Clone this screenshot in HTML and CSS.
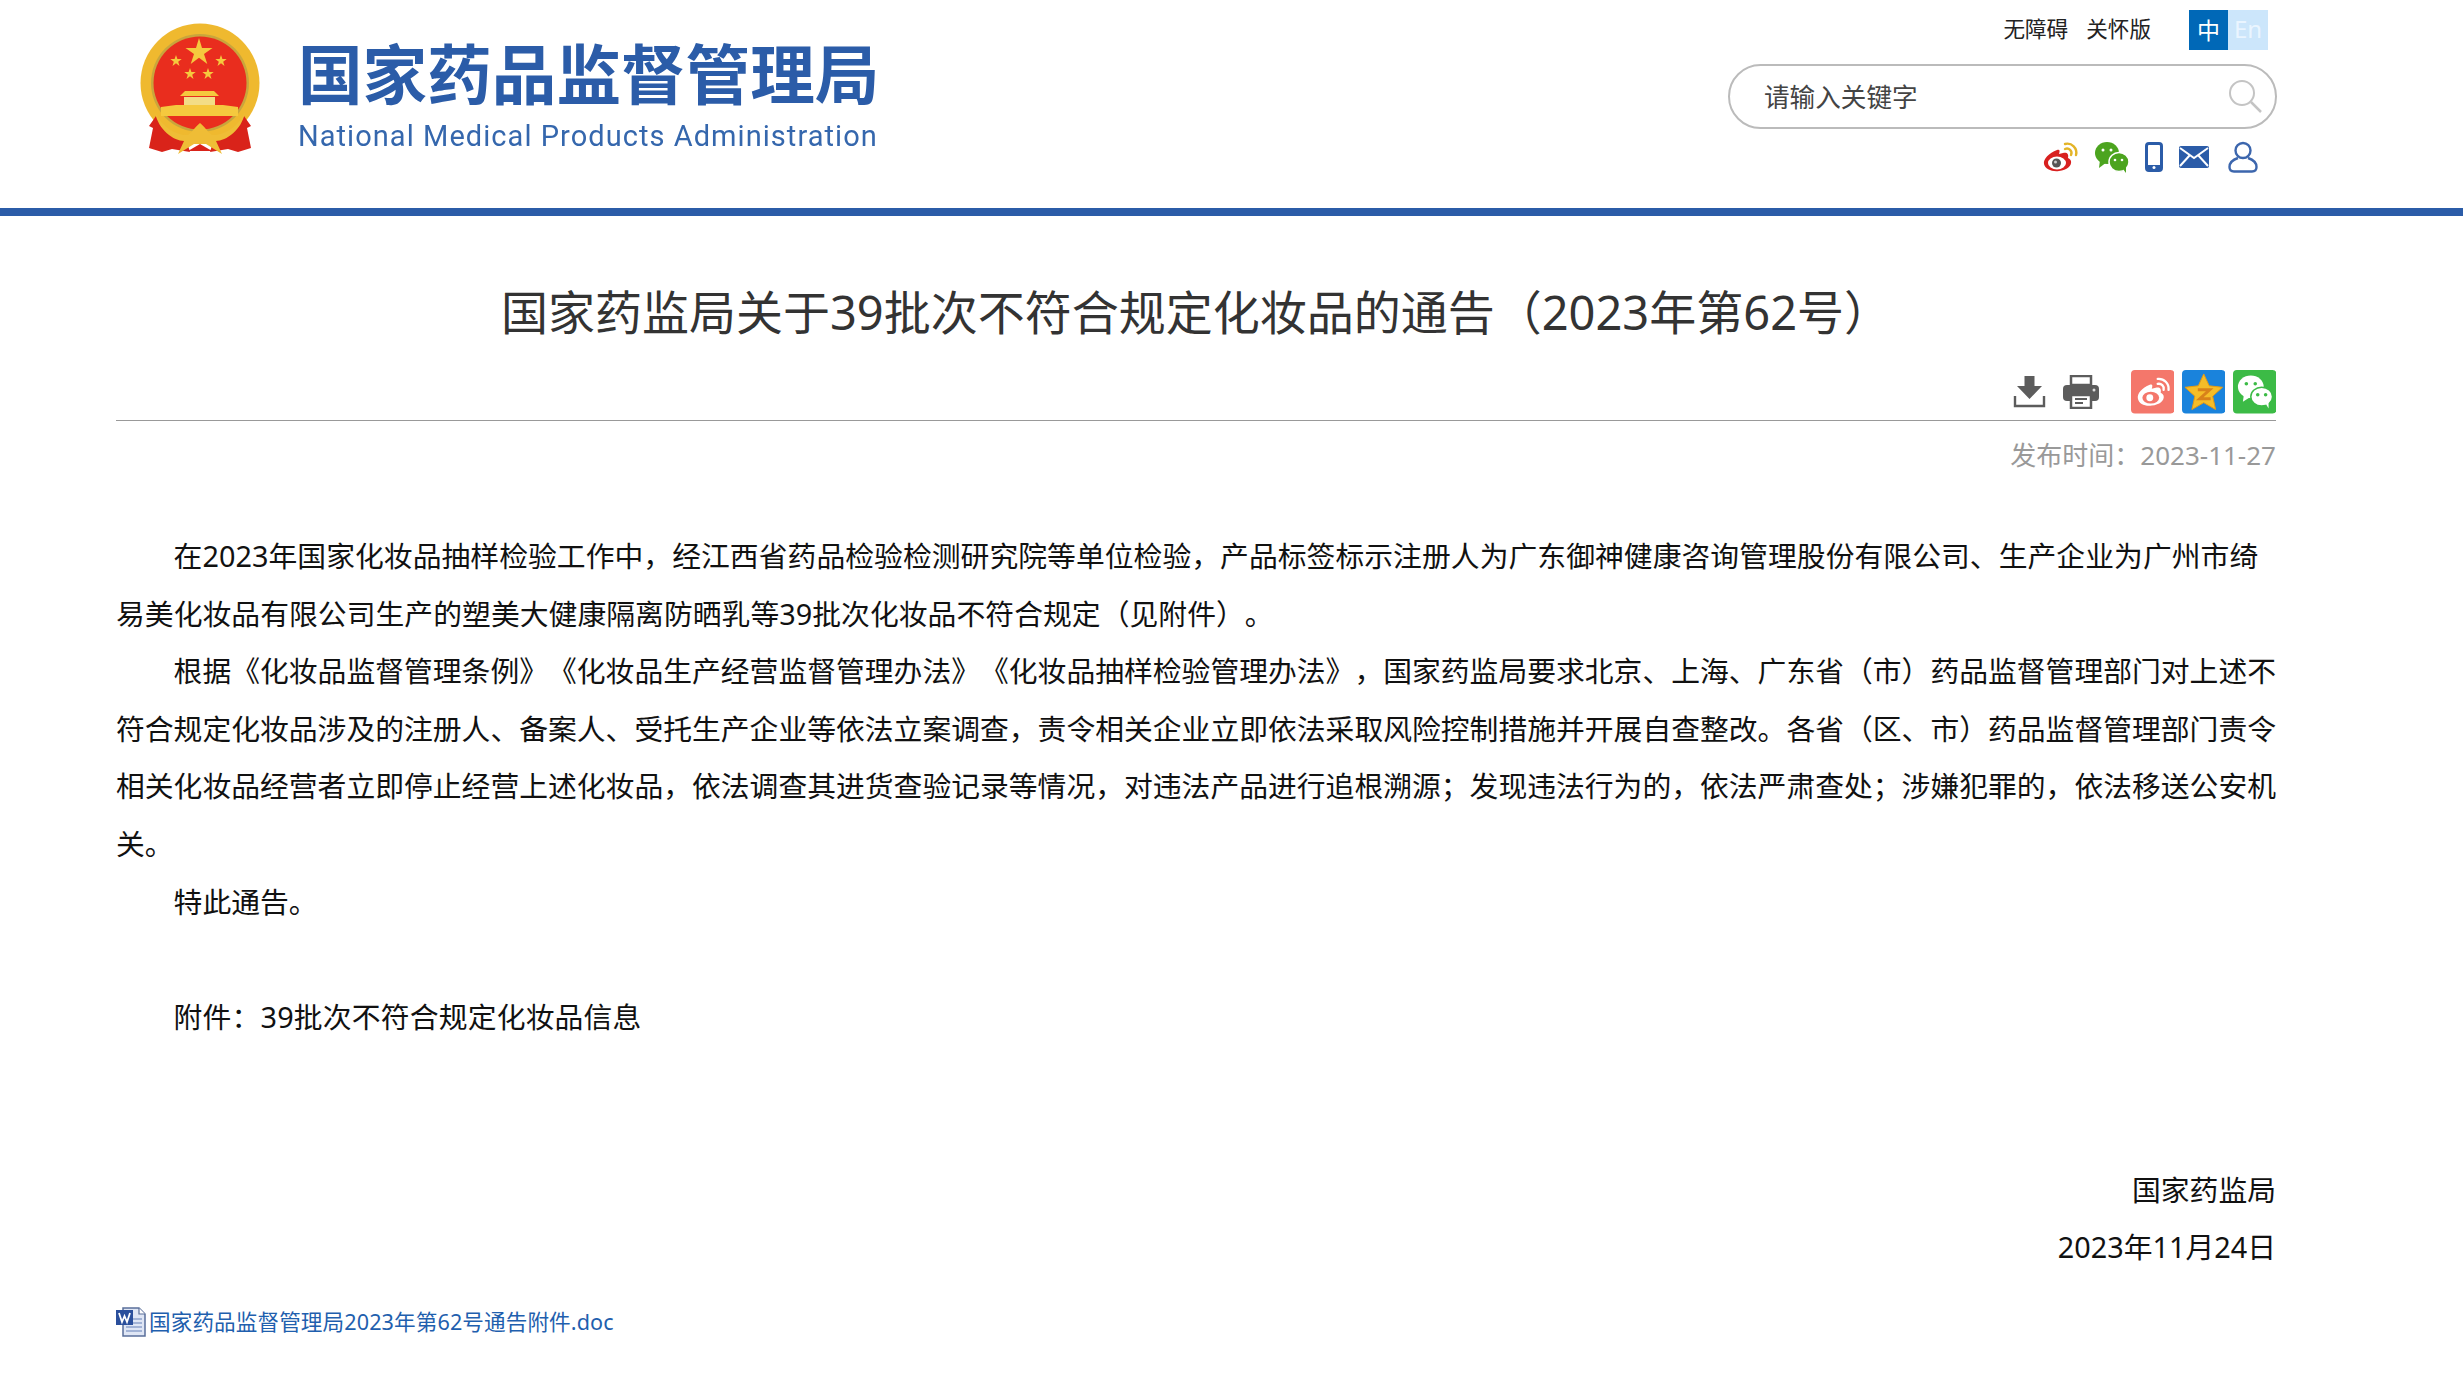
FILE: index.html
```html
<!DOCTYPE html>
<html lang="zh-CN">
<head>
<meta charset="utf-8">
<title>国家药监局关于39批次不符合规定化妆品的通告（2023年第62号）</title>
<link rel="stylesheet" href="styles.css">
</head>
<body>
<header class="site-header">
  <div class="brand">
    <svg class="emblem" viewBox="0 0 132 136" aria-hidden="true">
      <defs>
        <path id="star-s" d="M0 -6 L1.400 -1.900 H5.700 L2.200 .700 3.500 4.900 0 2.300 -3.500 4.900 -2.200 .700 -5.700 -1.900 H-1.400 Z"/>
      </defs>
      <g transform="translate(-1 0)">
      <circle cx="66" cy="63" r="59.500" fill="#efb92f"/>
      <circle cx="66" cy="63" r="49" fill="#c9a53c"/>
      <circle cx="66" cy="63" r="46.500" fill="#e92d1e"/>
      <g fill="#f5c93e">
        <path d="M65 18 L68 28 H78.500 L70 34 73.300 44 65 37.800 56.700 44 60 34 51.500 28 H62 Z"/>
        <use href="#star-s" x="42" y="41"/>
        <use href="#star-s" x="87" y="41"/>
        <use href="#star-s" x="56" y="54"/>
        <use href="#star-s" x="74" y="54"/>
        <path d="M46 76 L51 71 H80 L85 76 Z"/>
        <path d="M50 77 H81 V85 H50 Z" fill="#f3dd86"/>
        <path d="M27 87 L42 85 H89 L104 87 V96 H27 Z"/>
      </g>
      <path d="M22 96 C30 112 46 118 52 119 L56 132 L38 129 L28 132 L15 128 L19 108 L15 106 Z" fill="#d9231a"/>
      <path d="M110 96 C102 112 86 118 80 119 L76 132 L94 129 L104 132 L117 128 L113 108 L117 106 Z" fill="#d9231a"/>
      <path d="M21 92 C28 108 44 116 54 115 C60 110 62 106 66 103 C70 106 72 110 78 115 C88 116 104 108 111 92 C108 110 92 121 82 121 L88 134 L72 124 H60 L44 134 L50 121 C40 121 24 110 21 92 Z" fill="#efbd36"/>
      <path d="M54 131 L66 124 L78 131 Z" fill="#d9231a"/>
      </g>
    </svg>
    <div class="brand-text">
      <div class="brand-cn">国家药品监督管理局</div>
      <div class="brand-en">National Medical Products Administration</div>
    </div>
  </div>
  <div class="header-tools">
    <div class="top-links">
      <a class="top-link">无障碍</a>
      <a class="top-link">关怀版</a>
      <div class="lang"><span class="lang-cn">中</span><span class="lang-en">En</span></div>
    </div>
    <div class="search">
      <span class="search-text">请输入关键字</span>
      <svg class="search-icon" viewBox="0 0 34 34" aria-hidden="true"><circle cx="14" cy="14" r="12" fill="none" stroke="#c4c4c4" stroke-width="2"/><path d="M23 23 L33 33" stroke="#c4c4c4" stroke-width="2.500"/></svg>
    </div>
    <div class="social">
      <svg class="ic-weibo" viewBox="0 0 36 32" aria-hidden="true">
        <path d="M14 9 C6 12 0 18 1 23 C2 28 9 31 16 30 C24 29 29 25 28 20 C27.500 18 25 17 25 17 C26 13 24 11 20 12 L16 13 C17 10 17 8 14 9Z" fill="#d8201f"/>
        <ellipse cx="14" cy="22" rx="9" ry="6.500" fill="#fff"/>
        <circle cx="13.500" cy="22" r="4.500" fill="#555"/>
        <circle cx="12.500" cy="21" r="1.500" fill="#ccc"/>
        <path d="M22 3 A9 9 0 0 1 33 14 M22 8 A4.500 4.500 0 0 1 28 14" fill="none" stroke="#e3b428" stroke-width="2.400" stroke-linecap="round"/>
      </svg>
      <svg class="ic-wechat" viewBox="0 0 36 32" aria-hidden="true">
        <ellipse cx="13" cy="12" rx="12" ry="11" fill="#4ca41f"/>
        <path d="M6 19 L5 27 L13 21Z" fill="#4ca41f"/>
        <ellipse cx="25" cy="21" rx="10" ry="9.500" fill="#4ca41f" stroke="#fff" stroke-width="1.500"/>
        <path d="M29 28 L32 32 L32 25Z" fill="#4ca41f"/>
        <circle cx="9" cy="9" r="1.500" fill="#fff"/><circle cx="17" cy="9" r="1.500" fill="#fff"/>
        <circle cx="21" cy="19" r="1.300" fill="#fff"/><circle cx="28" cy="19" r="1.300" fill="#fff"/>
      </svg>
      <svg class="ic-phone" viewBox="0 0 18 30" aria-hidden="true">
        <rect x="1.500" y="1.500" width="15" height="27" rx="2.500" fill="none" stroke="#2b5ca8" stroke-width="3"/>
        <rect x="2" y="23" width="14" height="6" fill="#2b5ca8"/><circle cx="9" cy="25.500" r="1.500" fill="#fff"/>
      </svg>
      <svg class="ic-mail" viewBox="0 0 30 22" aria-hidden="true">
        <rect width="30" height="22" rx="2" fill="#2b5ca8"/>
        <path d="M1 2 L15 12 L29 2 M1 20 L11 9 M29 20 L19 9" fill="none" stroke="#fff" stroke-width="2"/>
      </svg>
      <svg class="ic-user" viewBox="0 0 30 32" aria-hidden="true">
        <circle cx="15" cy="9.500" r="7.500" fill="none" stroke="#3c66ad" stroke-width="2.400"/>
        <path d="M10 17 C4 19 1.500 22 1.500 26 C1.500 29 3 30.500 6 30.500 H24 C27 30.500 28.500 29 28.500 26 C28.500 22 26 19 20 17" fill="none" stroke="#3c66ad" stroke-width="2.400"/>
      </svg>
    </div>
  </div>
</header>

<main class="article">
  <h1 class="title">国家药监局关于39批次不符合规定化妆品的通告（2023年第62号）</h1>
  <div class="article-tools">
    <svg class="ic-download" viewBox="0 0 33 33" aria-hidden="true">
      <path d="M11.500 1 H21.500 V11 H29 L16.500 24 L4 11 H11.500 Z" fill="#5c5c5c"/>
      <path d="M2 21 V31 H31 V21" fill="none" stroke="#5c5c5c" stroke-width="2.400"/>
    </svg>
    <svg class="ic-print" viewBox="0 0 36 34" aria-hidden="true">
      <path d="M8 1 H28 V10 H8 Z" fill="none" stroke="#5c5c5c" stroke-width="2.500"/>
      <rect x="0" y="10" width="36" height="16" rx="4" fill="#5c5c5c"/>
      <rect x="8" y="20" width="20" height="13" fill="#fff" stroke="#5c5c5c" stroke-width="2.500"/>
      <path d="M12 24 H24 M12 28 H20" stroke="#5c5c5c" stroke-width="2"/>
      <circle cx="31" cy="15" r="1.500" fill="#ddd"/>
    </svg>
    <div class="shares">
      <svg class="share" viewBox="0 0 44 44" aria-hidden="true">
        <rect width="44" height="44" rx="4" fill="#f4776b"/>
        <path d="M19 15 C11 18 6 24 7 29 C8 34 14 37 21 36 C29 35 34 31 33 26 C32.500 24 30 23 30 23 C31 19 29 17 25 18 L21 19 C22 16 22 14 19 15Z" fill="#fff"/>
        <ellipse cx="20" cy="28" rx="8.500" ry="6" fill="#f4776b"/>
        <circle cx="19" cy="28" r="3.500" fill="#fff"/>
        <path d="M27 9 A10 10 0 0 1 38 20 M27 14 A5 5 0 0 1 33 20" fill="none" stroke="#fff" stroke-width="2.400" stroke-linecap="round"/>
      </svg>
      <svg class="share" viewBox="0 0 44 44" aria-hidden="true">
        <rect width="44" height="44" rx="4" fill="#1a83dc"/>
        <path d="M22 4 L27.500 16 L41 17.500 L31 26.500 L34 40 L22 33 L10 40 L13 26.500 L3 17.500 L16.500 16 Z" fill="#f5bd28" stroke="#e49a14" stroke-width="1"/>
        <path d="M16 20 H28 L18 29 H29" fill="none" stroke="#d8821a" stroke-width="3"/>
      </svg>
      <svg class="share" viewBox="0 0 44 44" aria-hidden="true">
        <rect width="44" height="44" rx="4" fill="#3cbb46"/>
        <ellipse cx="18" cy="17" rx="13" ry="11.500" fill="#fff"/>
        <path d="M11 25 L10 32 L18 27Z" fill="#fff"/>
        <ellipse cx="29" cy="27" rx="11" ry="9.500" fill="#fff" stroke="#3cbb46" stroke-width="1.500"/>
        <path d="M33 34 L36 39 L36 32Z" fill="#fff"/>
        <circle cx="13.500" cy="14" r="1.800" fill="#3cbb46"/><circle cx="22.500" cy="14" r="1.800" fill="#3cbb46"/>
        <circle cx="25" cy="25" r="1.800" fill="#3cbb46"/><circle cx="33" cy="25" r="1.800" fill="#3cbb46"/>
      </svg>
    </div>
  </div>
  <div class="publish-date">发布时间：2023-11-27</div>

  <div class="content">
    <p class="para para-first">在2023年国家化妆品抽样检验工作中，经江西省药品检验检测研究院等单位检验，产品标签标示注册人为广东御神健康咨询管理股份有限公司、生产企业为广州市绮<br>易美化妆品有限公司生产的塑美大健康隔离防晒乳等39批次化妆品不符合规定（见附件）。</p>
    <p class="para">根据《化妆品监督管理条例》《化妆品生产经营监督管理办法》《化妆品抽样检验管理办法》，国家药监局要求北京、上海、广东省（市）药品监督管理部门对上述不符合规定化妆品涉及的注册人、备案人、受托生产企业等依法立案调查，责令相关企业立即依法采取风险控制措施并开展自查整改。各省（区、市）药品监督管理部门责令相关化妆品经营者立即停止经营上述化妆品，依法调查其进货查验记录等情况，对违法产品进行追根溯源；发现违法行为的，依法严肃查处；涉嫌犯罪的，依法移送公安机关。</p>
    <p class="para">特此通告。</p>
    <p class="para">&nbsp;</p>
    <p class="para para-wide">附件：39批次不符合规定化妆品信息</p>
    <p class="para">&nbsp;</p>
    <p class="para">&nbsp;</p>
    <p class="para-right">国家药监局</p>
    <p class="para-right">2023年11月24日</p>
  </div>

  <div class="attachment">
    <svg class="ic-doc" viewBox="0 0 30 30" aria-hidden="true">
      <path d="M7 1 H23 L29 7 V29 H7 Z" fill="#dfe6f5" stroke="#5a6f9a" stroke-width="1.500"/>
      <path d="M23 1 V7 H29" fill="#fff" stroke="#5a6f9a" stroke-width="1.200"/>
      <path d="M15 12 H26 M15 16 H26 M10 20 H26 M10 24 H26" stroke="#8ea3cc" stroke-width="1.500"/>
      <rect x="0" y="3" width="17" height="15" fill="#2a4f9c"/>
      <path d="M3 6 L6 15 L8.500 9 L11 15 L14 6" fill="none" stroke="#fff" stroke-width="1.800"/>
    </svg>
    <a class="attachment-link">国家药品监督管理局2023年第62号通告附件.doc</a>
  </div>
</main>
</body>
</html>
```

FILE: styles.css
```css
* { box-sizing: border-box; }
html, body { margin: 0; padding: 0; background: #fff; }
body {
  width: 2463px;
  overflow-x: hidden;
  font-family: "Noto Sans", "Noto Sans CJK SC", sans-serif;
  color: #333;
  text-spacing-trim: space-all;
}
.site-header {
  height: 216px;
  border-bottom: 8px solid #2b5ca8;
  padding: 0 186px 0 135px;
  display: flex;
  justify-content: space-between;
  align-items: flex-start;
}
.brand { display: flex; align-items: flex-start; padding-top: 20px; gap: 31px; filter: blur(.4px); }
.emblem { width: 132px; height: 136px; display: block; }
.brand-text { padding-top: 15px; width: 590px; }
.brand-cn {
  font-family: "Noto Sans CJK SC", sans-serif;
  font-weight: 700;
  font-size: 64.600px;
  line-height: 72px;
  color: #2b5ca8;
  white-space: nowrap;
}
.brand-en {
  font-family: Roboto, sans-serif;
  font-size: 29px;
  letter-spacing: 1.050px;
  line-height: 36px;
  margin-top: 11px;
  color: #3567ad;
  white-space: nowrap;
}
.header-tools { width: 549px; display: flex; flex-direction: column; align-items: flex-end; }
.top-links { display: flex; align-items: center; height: 40px; margin-top: 10px; padding-right: 9px; }
.top-link { font-family: "Noto Sans CJK SC", sans-serif; font-size: 21.600px; color: #222; margin-right: 18px; padding-bottom: 5px; }
.top-link + .top-link { margin-right: 38px; }
.lang { display: flex; height: 40px; line-height: 38px; text-align: center; }
.lang-cn { width: 39px; background: #0068b7; color: #fff; font-family: "Noto Sans CJK SC", sans-serif; font-size: 23px; }
.lang-en { width: 40px; background: #cce6fb; color: #eaf5ff; font-size: 24px; }
.search {
  width: 549px;
  height: 65px;
  margin-top: 14px;
  border: 2px solid #bbb;
  border-radius: 33px;
  display: flex;
  align-items: center;
  justify-content: space-between;
  padding: 0 13px 0 34px;
}
.search-text { font-size: 25.600px; color: #444; line-height: 36px; padding-top: 2px; }
.search-icon { width: 34px; height: 34px; margin-top: -2px; }
.social { display: flex; align-items: center; height: 36px; margin-top: 10px; padding-right: 19.500px; filter: blur(.3px); }
.ic-weibo { width: 36px; height: 32px; margin-right: 15px; }
.ic-wechat { width: 36px; height: 32px; margin-right: 15px; }
.ic-phone { width: 18px; height: 30px; margin-right: 16px; }
.ic-mail { width: 30px; height: 22px; margin-right: 19px; }
.ic-user { width: 30px; height: 32px; }

.article { width: 2160px; margin-left: 116px; }
.title {
  margin: 0;
  padding-top: 66px;
  font-size: 47px;
  font-weight: 400;
  line-height: 60px;
  text-align: center;
  color: #333;
}
.article-tools {
  height: 79px;
  border-bottom: 1px solid #999;
  display: flex;
  justify-content: flex-end;
  align-items: flex-start;
  padding-top: 28px;
}
.ic-download { width: 33px; height: 33px; margin-top: 5px; margin-right: 17px; filter: blur(.3px); }
.ic-print { width: 36px; height: 34px; margin-top: 5px; margin-right: 32px; filter: blur(.3px); }
.shares { display: flex; gap: 7.500px; filter: blur(.3px); }
.share { width: 43.500px; height: 43.500px; display: block; }
.publish-date { margin-top: 16px; text-align: right; font-size: 26px; line-height: 36px; color: #999; }
.content { margin-top: 54px; font-size: 28.800px; line-height: 57.600px; color: #111; }
.para { margin: 0; text-indent: 2em; text-align: justify; }
.para-first { letter-spacing: .04px; }
.para-wide { letter-spacing: .18px; }
.para-right { margin: 0; text-align: right; }
.attachment { margin-top: 28px; display: flex; align-items: center; gap: 3px; }
.ic-doc { width: 30px; height: 30px; }
.attachment-link { font-size: 21.600px; line-height: 36px; letter-spacing: .1px; color: #1f5fae; }
```
